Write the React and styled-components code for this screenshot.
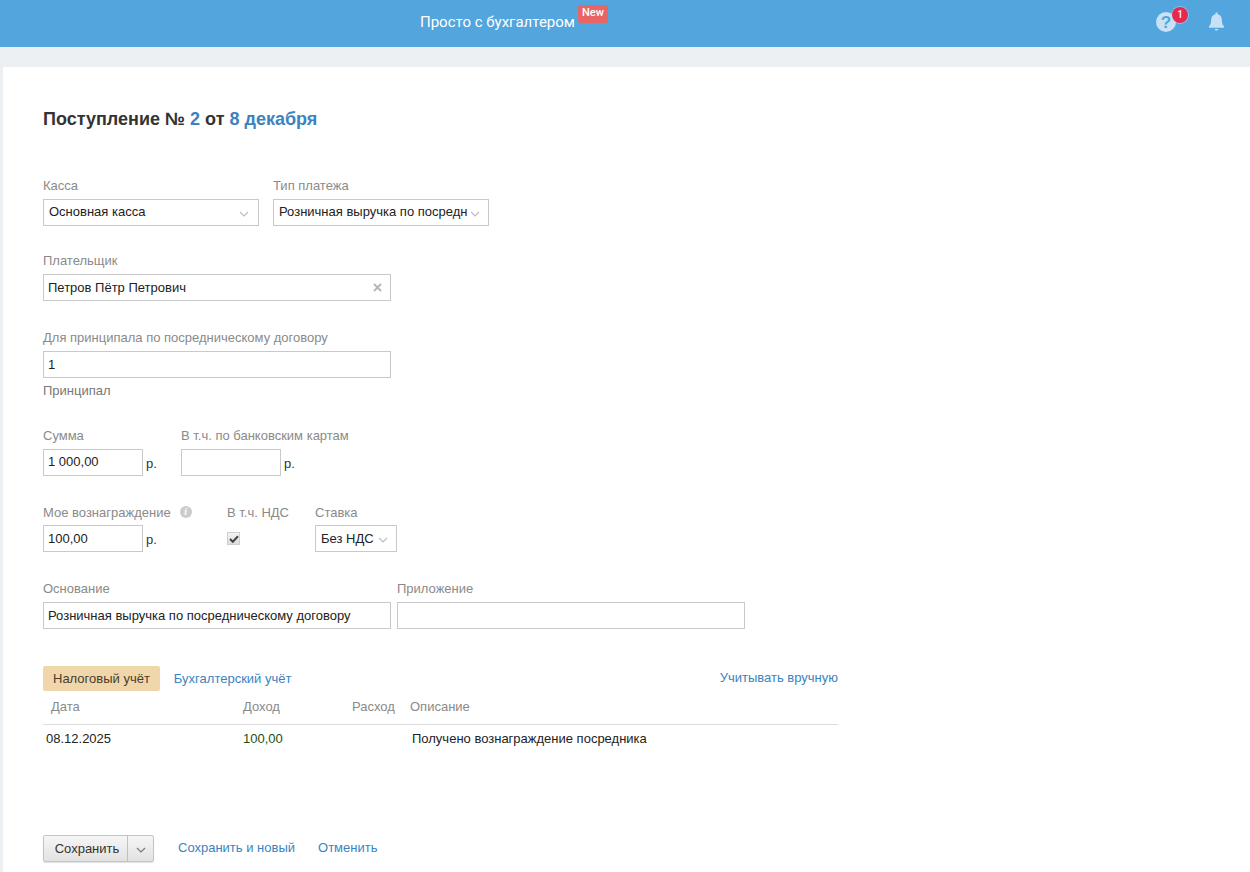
import React from "react";
import styled, { createGlobalStyle } from "styled-components";

const Global = createGlobalStyle`
  html, body { margin: 0; padding: 0; background: #ecf0f3; height: 100%; overflow: hidden; }
  body { font-family: "Liberation Sans", Arial, sans-serif; font-size: 13px; color: #333; }
`;

const Page = styled.div`
  width: 1250px;
  height: 872px;
  overflow: hidden;
  display: flex;
  flex-direction: column;
`;

const Header = styled.header`
  height: 47px;
  flex: none;
  background: #52a5dd;
  display: flex;
  align-items: flex-start;
  padding: 0 25px 0 420px;
  box-sizing: border-box;
`;

const Brand = styled.div`
  font-family: Roboto, sans-serif;
  font-size: 15px;
  line-height: 18px;
  color: #fff;
  margin-top: 13px;
`;

const NewBadge = styled.span`
  width: 30px;
  height: 18px;
  margin: 5px 0 0 3px;
  background: #e96565;
  border-radius: 3px;
  color: #fff;
  font-family: Roboto, sans-serif;
  font-size: 11px;
  font-weight: 500;
  line-height: 16px;
  text-align: center;
`;

const HeaderIcons = styled.div`
  margin-left: auto;
  display: flex;
  align-items: flex-start;
  gap: 32px;
`;

const HelpWrap = styled.div`
  position: relative;
  width: 20px;
  height: 20px;
  margin-top: 12px;
`;

const Counter = styled.span`
  position: absolute;
  left: 16px;
  top: -5px;
  width: 16px;
  height: 16px;
  border-radius: 50%;
  background: #e5294f;
  box-shadow: 0 0 0 1px rgba(190, 222, 245, 0.55);
  color: #fff;
  font-family: Roboto, sans-serif;
  font-size: 10px;
  font-weight: 500;
  line-height: 16px;
  text-align: center;
`;

const BellIcon = styled.svg`
  width: 17px;
  height: 20px;
  margin-top: 12px;
  display: block;
`;

const Content = styled.main`
  flex: 1;
  margin: 20px 0 0 3px;
  background: #fff;
  padding: 40px 0 0 40px;
  box-sizing: border-box;
`;

const Title = styled.h1`
  margin: 0 0 48px;
  font-size: 18px;
  line-height: 24px;
  font-weight: 700;
  color: #333;
`;

const TitleLink = styled.span`
  color: #3b83c0;
`;

const Row = styled.div`
  display: flex;
  gap: ${(p) => p.$gap ?? 14}px;
  margin-bottom: ${(p) => p.$mb ?? 30}px;
`;

const Field = styled.div`
  width: ${(p) => p.$w}px;
  flex: none;
`;

const Label = styled.div`
  height: 20px;
  box-sizing: border-box;
  padding-top: ${(p) => (p.$low ? 1 : 0)}px;
  line-height: 13px;
  color: #8a8a8a;
  white-space: nowrap;
  display: flex;
  align-items: flex-start;
`;

const Box = styled.div`
  width: ${(p) => p.$w ?? 0}px;
  height: 27px;
  box-sizing: border-box;
  border: 1px solid #c9c9c9;
  background: #fff;
  display: flex;
  align-items: center;
  padding: 0 ${(p) => p.$pr ?? 4}px 0 ${(p) => p.$pl ?? 4}px;
  color: #222;
  white-space: nowrap;
  overflow: hidden;
`;

const BoxText = styled.span`
  flex: 1;
  min-width: 0;
  overflow: hidden;
  margin-top: ${(p) => (p.$up ? -2 : 0)}px;
`;

const Chevron = styled.svg`
  width: 10px;
  height: 6px;
  flex: none;
  margin-top: 2px;
`;

const Inline = styled.div`
  display: flex;
  align-items: center;
`;

const Unit = styled.span`
  margin-left: 3px;
  padding-top: 2px;
  color: #333;
`;

const SubLabel = styled.div`
  color: #777;
  line-height: 15px;
  margin: 5px 0 0;
`;

const InfoDot = styled.span`
  width: 12px;
  height: 12px;
  border-radius: 50%;
  background: #ccc;
  color: #fff;
  font-family: "Liberation Serif", serif;
  font-style: italic;
  font-weight: 700;
  font-size: 10px;
  line-height: 12px;
  text-align: center;
  margin-left: 9px;
`;

const Check = styled.span`
  width: 11px;
  height: 11px;
  margin-top: 7px;
  background: linear-gradient(#f3f3f3, #dcdcdc);
  border: 1px solid #cfcfcf;
  display: flex;
  align-items: center;
  justify-content: center;
  box-sizing: content-box;
`;

const TaxBlock = styled.section`
  width: 795px;
  margin-top: 37px;
`;

const TabsBar = styled.div`
  display: flex;
  align-items: center;
  height: 25px;
`;

const ActiveTab = styled.div`
  height: 25px;
  line-height: 25px;
  padding: 0 10px;
  background: #f0d6ab;
  border-radius: 2px;
  color: #4a3c2a;
`;

const A = styled.a`
  color: #3b83c0;
  white-space: nowrap;
`;

const TabLink = styled(A)`
  margin-left: 14px;
`;

const ManualLink = styled(A)`
  margin: -2px 0 0 auto;
`;

const TableGrid = styled.div`
  display: grid;
  grid-template-columns: 200px 106px 61px 1fr;
`;

const HeadCell = styled.div`
  height: 33px;
  line-height: 32px;
  color: #8a8a8a;
  border-bottom: 1px solid #dcdcdc;
  padding-left: ${(p) => p.$pl}px;
`;

const Cell = styled.div`
  height: 28px;
  line-height: 28px;
  color: ${(p) => p.$c ?? "#222"};
  padding-left: ${(p) => p.$pl}px;
`;

const Actions = styled.div`
  display: flex;
  align-items: center;
  margin-top: 82px;
`;

const SaveGroup = styled.div`
  display: flex;
  height: 27px;
  box-sizing: border-box;
  border: 1px solid #c4c4c4;
  border-radius: 2px;
  background: linear-gradient(#f6f6f6, #e2e2e2);
  box-shadow: 0 1px 1px rgba(0, 0, 0, 0.12);
  color: #333;
`;

const SaveMain = styled.div`
  width: 84px;
  box-sizing: border-box;
  padding-left: 3px;
  line-height: 25px;
  text-align: center;
  border-right: 1px solid #c0c0c0;
`;

const SaveMore = styled.div`
  width: 25px;
  display: flex;
  align-items: center;
  justify-content: center;
`;

const ActionLink = styled(A)`
  margin: -2px 0 0 ${(p) => p.$ml}px;
`;

const Arrow = ({ color = "#bdbdbd" }) => (
  <Chevron viewBox="0 0 10 6">
    <path d="M1 1l4 4 4-4" fill="none" stroke={color} strokeWidth="1.2" />
  </Chevron>
);

export default function App() {
  return (
    <Page>
      <Global />
      <Header>
        <Brand>Просто с бухгалтером</Brand>
        <NewBadge>New</NewBadge>
        <HeaderIcons>
          <HelpWrap>
            <svg width="20" height="20" viewBox="0 0 20 20">
              <circle cx="10" cy="10" r="10" fill="#c8e1f5" />
              <text x="10" y="16" textAnchor="middle" fontFamily="Liberation Sans" fontWeight="700" fontSize="17" fill="#52a5dd">?</text>
            </svg>
            <Counter>1</Counter>
          </HelpWrap>
          <BellIcon viewBox="0 0 18 21">
            <path d="M9 .5c.8 0 1.200.5 1.200 1.300v.6c3 .7 4.500 3 4.500 6.200 0 3.400.8 5 2.300 6.600v1.300H1v-1.300c1.500-1.600 2.300-3.200 2.300-6.600 0-3.200 1.500-5.500 4.500-6.200v-.6C7.800 1 8.200.5 9 .5z" fill="#c8e1f5" />
            <path d="M7 18h4c0 .9-.9 1.600-2 1.600S7 18.900 7 18z" fill="#c8e1f5" />
          </BellIcon>
        </HeaderIcons>
      </Header>
      <Content>
        <Title>
          Поступление № <TitleLink>2</TitleLink> от <TitleLink>8 декабря</TitleLink>
        </Title>

        <Row $mb={28}>
          <Field $w={216}>
            <Label>Касса</Label>
            <Box $w={216} $pl={5} $pr={9}>
              <BoxText $up>Основная касса</BoxText>
              <Arrow />
            </Box>
          </Field>
          <Field $w={216}>
            <Label>Тип платежа</Label>
            <Box $w={216} $pl={5} $pr={8}>
              <BoxText $up>Розничная выручка по посредн</BoxText>
              <Arrow />
            </Box>
          </Field>
        </Row>

        <Row>
          <Field $w={348}>
            <Label>Плательщик</Label>
            <Box $w={348} $pr={8}>
              <BoxText>Петров Пётр Петрович</BoxText>
              <svg width="9" height="9" viewBox="0 0 9 9">
                <path d="M1 1l7 7M8 1l-7 7" stroke="#b5b5b5" strokeWidth="1.8" />
              </svg>
            </Box>
          </Field>
        </Row>

        <Row $mb={31}>
          <Field $w={348}>
            <Label>Для принципала по посредническому договору</Label>
            <Box $w={348}>
              <BoxText>1</BoxText>
            </Box>
            <SubLabel>Принципал</SubLabel>
          </Field>
        </Row>

        <Row $gap={24} $mb={29}>
          <Field $w={114}>
            <Label>Сумма</Label>
            <Inline>
              <Box $w={100}>
                <BoxText $up>1 000,00</BoxText>
              </Box>
              <Unit>р.</Unit>
            </Inline>
          </Field>
          <Field $w={170}>
            <Label>В т.ч. по банковским картам</Label>
            <Inline>
              <Box $w={100} />
              <Unit>р.</Unit>
            </Inline>
          </Field>
        </Row>

        <Row $gap={0}>
          <Field $w={184}>
            <Label $low>
              Мое вознаграждение
              <InfoDot>i</InfoDot>
            </Label>
            <Inline>
              <Box $w={100}>
                <BoxText>100,00</BoxText>
              </Box>
              <Unit>р.</Unit>
            </Inline>
          </Field>
          <Field $w={88}>
            <Label $low>В т.ч. НДС</Label>
            <Check>
              <svg width="10" height="8" viewBox="0 0 10 8">
                <path d="M1 4l2.800 2.800L9 1.200" fill="none" stroke="#444" strokeWidth="2" />
              </svg>
            </Check>
          </Field>
          <Field $w={82}>
            <Label $low>Ставка</Label>
            <Box $w={82} $pl={5} $pr={8}>
              <BoxText>Без НДС</BoxText>
              <Arrow />
            </Box>
          </Field>
        </Row>

        <Row $gap={6} $mb={0}>
          <Field $w={348}>
            <Label>Основание</Label>
            <Box $w={348}>
              <BoxText>Розничная выручка по посредническому договору</BoxText>
            </Box>
          </Field>
          <Field $w={348}>
            <Label>Приложение</Label>
            <Box $w={348} />
          </Field>
        </Row>

        <TaxBlock>
          <TabsBar>
            <ActiveTab>Налоговый учёт</ActiveTab>
            <TabLink>Бухгалтерский учёт</TabLink>
            <ManualLink>Учитывать вручную</ManualLink>
          </TabsBar>
          <TableGrid>
            <HeadCell $pl={8}>Дата</HeadCell>
            <HeadCell $pl={0}>Доход</HeadCell>
            <HeadCell $pl={3}>Расход</HeadCell>
            <HeadCell $pl={0}>Описание</HeadCell>
            <Cell $pl={3}>08.12.2025</Cell>
            <Cell $pl={0} $c="#17520f">100,00</Cell>
            <Cell $pl={3} />
            <Cell $pl={2}>Получено вознаграждение посредника</Cell>
          </TableGrid>
        </TaxBlock>

        <Actions>
          <SaveGroup>
            <SaveMain>Сохранить</SaveMain>
            <SaveMore>
              <Arrow color="#777" />
            </SaveMore>
          </SaveGroup>
          <ActionLink $ml={24}>Сохранить и новый</ActionLink>
          <ActionLink $ml={23}>Отменить</ActionLink>
        </Actions>
      </Content>
    </Page>
  );
}
